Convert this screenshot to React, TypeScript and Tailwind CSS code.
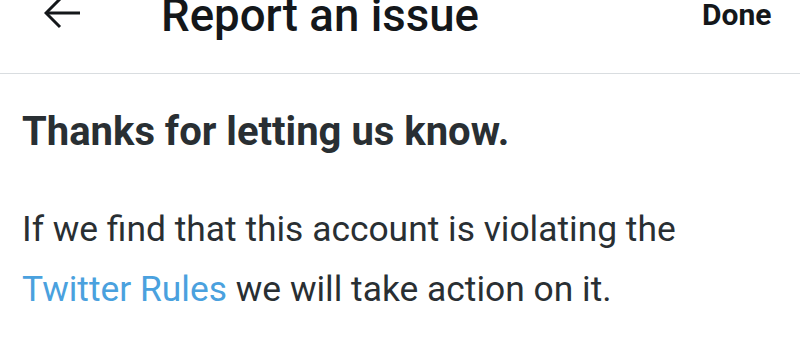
export default function App() {
  return (
    <div className="w-[800px] h-[352px] bg-white overflow-hidden" style={{ fontFamily: "Roboto, sans-serif" }}>
      <div className="h-[74px] border-b border-[#d9dde0] flex items-start relative">
        <svg className="absolute left-[44px] top-[-2px]" width="38" height="32" viewBox="0 0 38 32" fill="none" stroke="#14171a" strokeWidth="3">
          <path d="M2 15 H36" />
          <path d="M16 1 L2 15 L16 29" />
        </svg>
        <div className="absolute left-[161px] top-[-9px] text-[45.6px] font-medium text-[#14171a] leading-[50px]">Report an issue</div>
        <div className="absolute left-[702px] top-[-3px] text-[30px] font-bold text-[#14171a] leading-[36px]">Done</div>
      </div>
      <div className="px-[22px] pt-[34px]">
        <div className="text-[40px] font-bold text-[#292f33] leading-[48px]">Thanks for letting us know.</div>
        <div className="mt-[43px] text-[35.4px] text-[#292f33] leading-[60px]">
          If we find that this account is violating the
          <br />
          <span className="text-[#4aa1de]">Twitter Rules</span> we will take action on it.
        </div>
      </div>
    </div>
  );
}
